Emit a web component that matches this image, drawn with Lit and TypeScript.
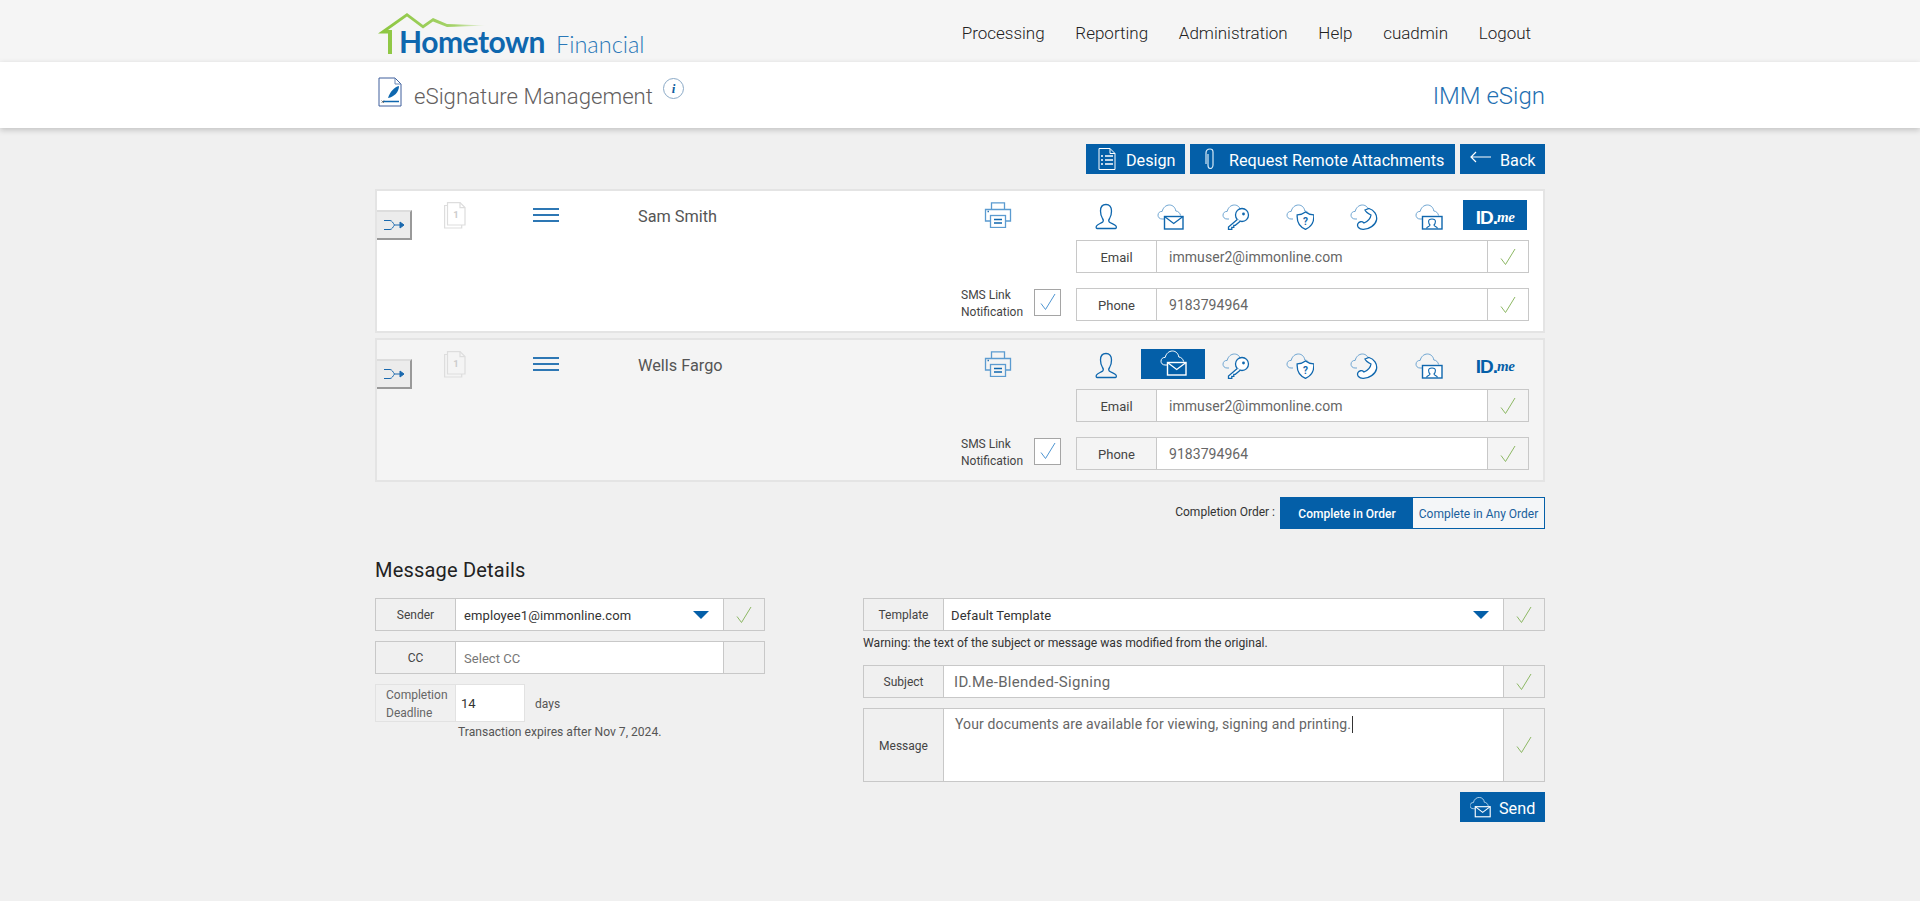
import { LitElement, html, css, svg } from "lit";
import { customElement } from "lit/decorators.js";

const cloud = (c: string) => svg`<path d="M9 19H7C4.5 19 3 17.2 3 15.2C3 12.8 5 11.2 7.2 11.4C8 7.6 11 5 14.4 5C18 5 20.4 7.8 20.8 11C23 11 25 13 25.6 15.5" fill="none" stroke="${c}" stroke-width="1"/>`;

const icons: Record<string, (d: string, l: string) => unknown> = {
  user: (d) => svg`<path d="M6 28.5H24.5C25.5 28.5 25.5 27 25 26C24 24 20 23.5 18.3 22C17.4 21 17.6 19.8 18.6 18.5C20 16.5 20.5 14 20.5 11C20.5 7 18.5 4.5 15 4.5C11.5 4.5 9.5 7 9.5 11C9.5 14 10.2 16.5 11.5 18.5C12.5 19.8 12.6 21 11.7 22C10 23.5 6.5 24 5.5 26C5 27 5 28.5 6 28.5Z" fill="none" stroke="${d}" stroke-width="1.3"/>`,
  mail: (d, l) => svg`${cloud(l)}<rect x="9.5" y="16.5" width="18.5" height="12.5" fill="none" stroke="${d}" stroke-width="1.4"/><path d="M9.5 16.5L18.7 23.5L28 16.5" fill="none" stroke="${d}" stroke-width="1.3"/>`,
  key: (d, l) => svg`${cloud(l)}<circle cx="22" cy="15" r="6.5" fill="#fff" stroke="${d}" stroke-width="1.3"/><circle cx="23.5" cy="14" r="1.4" fill="${d}"/><path d="M17.3 19.5L8.5 27V29.3H11.8V27.3H13.8V25.3H15.3L20.5 21" fill="#fff" stroke="${d}" stroke-width="1.3"/>`,
  shield: (d, l) => svg`${cloud(l)}<path d="M21.5 12C24 14 26.500 14.800 29.800 14.800C30.300 21.500 27.500 26.800 21.500 29.300C15.500 26.800 12.700 21.500 13.200 14.800C16.500 14.800 19 14 21.500 12Z" fill="#fff" stroke="${d}" stroke-width="1.3"/><text x="21.500" y="24.500" text-anchor="middle" font-family="Roboto" font-weight="700" font-size="10" fill="${d}">?</text>`,
  phone: (d, l) => svg`${cloud(l)}<path d="M17 10L21 8.5C26 10 29.5 15 28.5 20C27.5 25 21 29.5 15 29.3C11 29.3 8.5 26.5 10 23.5C11 21.5 14 21 16 23C19.5 21.5 22.5 18.5 23 15C21 14 18 12.5 17 10Z" fill="#fff" stroke="${d}" stroke-width="1.3"/>`,
  video: (d, l) => svg`${cloud(l)}<rect x="9.5" y="16.5" width="19.5" height="12.5" fill="#fff" stroke="${d}" stroke-width="1.4"/><path d="M13.5 28.5C14 26.5 17 26.5 17 25C16 24 15.6 22.8 15.6 21.5C15.6 19.8 16.8 19 19 19C21.2 19 22.4 19.8 22.4 21.5C22.4 22.8 22 24 21 25C21 26.5 24 26.5 24.5 28.5" fill="none" stroke="${d}" stroke-width="1.1"/>`,
};

const check = (c = "#8db864") => html`<svg width="16" height="18" viewBox="0 0 16 18"><path d="M1 10.5L5.5 16.5L15 1" fill="none" stroke="${c}" stroke-width="1"/></svg>`;

const pageIcon = html`<svg width="24" height="28" viewBox="0 0 24 28" fill="none" stroke="#ddd" stroke-width="1.2"><path d="M3.5 3.5H.6V26H17.7V23"/><path d="M3.5 .6H16L21 5.6V23H3.5Z"/><path d="M16 .6V5.6H21" /><text x="12" y="15.5" text-anchor="middle" font-family="Roboto" font-weight="700" font-size="9.5" stroke="none" fill="#ccc">1</text></svg>`;

const printer = html`<svg width="28" height="26" viewBox="0 0 28 26" fill="none" stroke="#5b9bd0" stroke-width="1.3"><path d="M7.5 7V.8H20.5V7"/><path d="M6.5 19H1.5V7.5H26.5V19H21.5"/><rect x="6.5" y="13.5" width="15" height="12"/><path d="M10 17.5H18M10 21H18" stroke="#0f67ae"/><path d="M3.5 9.5H5" stroke="#2d77b4"/></svg>`;

const merge = html`<svg width="22" height="12" viewBox="0 0 22 12" fill="none" stroke="#1a69ae" stroke-width="1"><path d="M1 1.5H7C9 1.5 10 4 11.5 6C10 8 9 10.5 7 10.5H1"/><path d="M11.5 6H18"/><path d="M17 3L21 6L17 9Z" fill="#1a69ae"/></svg>`;

const caret = html`<svg class="caret" width="16" height="9" viewBox="0 0 16 9"><path d="M0 0H16L8 8Z" fill="#045fa8"/></svg>`;

@customElement("app-root")
export class AppRoot extends LitElement {
  static styles = css`
    :host { display: block; min-height: 901px; background: #f0f0f0; font-family: Roboto, sans-serif; color: #555; }
    .wrap { width: 1170px; margin: 0 auto; }
    .top { background: #f5f5f5; height: 62px; }
    .top .wrap { display: flex; justify-content: space-between; height: 62px; }
    .logo { position: relative; width: 280px; height: 62px; }
    .logo svg { position: absolute; left: 0; top: 0; }
    .hometown { position: absolute; left: 24px; top: 21px; font: 700 30px/40px Lato, sans-serif; color: #0f67ae; letter-spacing: -.5px; }
    .financial { position: absolute; left: 181px; top: 29px; font: 300 23.5px/30px Lato, sans-serif; color: #2a78b8; }
    nav { display: flex; gap: 30.7px; padding: 24px 14px 0 0; font-size: 17px; line-height: 19px; font-weight: 300; color: #222; }
    .band { background: #fff; height: 66px; box-shadow: 0 2px 6px rgba(0,0,0,.2); }
    .band .wrap { display: flex; align-items: flex-start; }
    .band .doc { margin: 15px 12px 0 3px; }
    .title { font-size: 22.2px; line-height: 26px; font-weight: 300; color: #645f5f; margin-top: 21px; }
    .info { margin: 16px 0 0 10px; }
    .prod { margin-left: auto; margin-top: 20px; font-size: 24px; line-height: 28px; font-weight: 300; color: #1f70b2; }
    .actions { display: flex; justify-content: flex-end; gap: 5px; padding-top: 16px; }
    .btn { height: 30px; background: #045fa8; color: #fff; display: flex; align-items: center; font-size: 16.2px; box-sizing: border-box; }
    .btn svg { flex: none; }
    .btn span { margin-top: 3px; }
    .design { width: 99px; padding-left: 12px; gap: 10px; }
    .req { width: 265px; padding-left: 14px; gap: 14px; }
    .back { width: 85px; padding-left: 10px; gap: 9px; }
    .back svg { margin-top: -4px; }
    .card { margin-top: 5px; height: 144px; box-sizing: border-box; border: 2px solid #e4e4e4; background: #fff; display: grid; grid-template-columns: 584px 115px 453px; grid-template-rows: 30px 33px 33px; row-gap: 10px; padding-top: 9px; }
    .card.first { margin-top: 15px; }
    .card.alt { background: #f4f4f4; }
    .left { grid-row: 1 / 4; display: flex; align-items: flex-start; }
    .merge { flex: none; margin-top: 10px; width: 35px; height: 30px; box-sizing: border-box; background: #ececec; border-right: 2px solid #999; border-bottom: 2px solid #999; border-top: 2px solid #ddd; display: flex; align-items: center; justify-content: center; }
    .pg { margin: 2px 0 0 32px; width: 24px; }
    .lines { margin: 8px 0 0 65px; width: 26px; height: 14px; border-top: 2px solid #2d77b4; }
    .lines i { display: block; height: 2px; background: #2d77b4; margin-top: 4px; }
    .name { margin: 7px 0 0 79px; font-size: 16.3px; line-height: 20px; color: #555; }
    .prn { grid-column: 2; grid-row: 1; padding: 2px 0 0 23px; }
    .sms { grid-column: 2; grid-row: 3; margin-top: 5px; display: flex; align-items: center; font-size: 12px; line-height: 17px; color: #444; }
    .sms span { width: 70px; margin-top: 3px; }
    .cb { width: 27px; height: 27px; box-sizing: border-box; border: 1px solid #a5a5a5; background: #fff; margin-left: 3px; display: flex; align-items: center; justify-content: center; }
    .methods { grid-column: 3; grid-row: 1; display: grid; grid-template-columns: repeat(7, 64.4px); width: 451px; margin-left: .6px; }
    .m { height: 30px; display: flex; align-items: center; justify-content: center; padding-right: 6px; box-sizing: border-box; }
    .m.sel { background: #045fa8; padding-right: 0; }
    .m.sel svg { margin-top: -6px; }
    .idme { padding: 5px 0 0; font: 700 19px/25px "Liberation Sans", sans-serif; color: #045fa8; letter-spacing: -1px; }
    .idme em { font: italic 700 15px "Liberation Serif", serif; letter-spacing: -.5px; }
    .idme.sel { color: #fff; padding-right: 0; }
    .field { display: flex; height: 33px; box-sizing: border-box; border: 1px solid #c8c8c8; }
    .f-1 { grid-column: 3; grid-row: 2; }
    .f-2 { grid-column: 3; grid-row: 3; margin-top: 5px; }
    .lab { flex: none; width: 80px; box-sizing: border-box; padding-top: 1px; border-right: 1px solid #c8c8c8; display: flex; align-items: center; justify-content: center; font-size: 13px; color: #444; text-align: center; }
    .val { flex: 1; display: flex; align-items: center; padding: 1px 0 0 12px; background: #fff; font-size: 14px; letter-spacing: .05px; color: #666; min-width: 0; }
    .chk { flex: none; width: 41px; box-sizing: border-box; border-left: 1px solid #c8c8c8; display: flex; align-items: center; justify-content: center; }
    .order { display: flex; justify-content: flex-end; align-items: center; margin-top: 15px; font-size: 12px; color: #333; }
    .order .t { margin-right: 5px; margin-top: -2px; }
    .seg { display: flex; height: 32px; width: 265px; box-sizing: border-box; border: 1px solid #045fa8; background: #f4f6f8; }
    .seg b { width: 132px; background: #045fa8; color: #fff; font-weight: 500; display: flex; align-items: center; justify-content: center; padding-top: 1px; box-sizing: border-box; }
    .seg span { flex: 1; color: #1a5f9c; display: flex; align-items: center; justify-content: center; padding-top: 1px; }
    h2 { margin: 29px 0 0; font-size: 20px; line-height: 24px; letter-spacing: .2px; font-weight: 400; color: #222; }
    .cols { display: grid; grid-template-columns: 390px 682px; justify-content: space-between; margin-top: 16px; align-items: start; }
    .stack { display: flex; flex-direction: column; }
    .stack .lab { font-size: 12px; }
    .grow { flex: 1; }
    .caret { margin-right: 14px; }
    .sel-text { color: #333; font-size: 13px; letter-spacing: .1px; }
    .ph { color: #777; font-size: 13px; }
    .lcol .val { padding-left: 8px; }
    .gap { margin-top: 10px; }
    .deadline { display: flex; margin-top: 10px; height: 38px; font-size: 12px; }
    .dl { width: 81px; box-sizing: border-box; border: 1px solid #e2e2e2; line-height: 18px; color: #666; padding: 1px 0 0 10px; }
    .dv { width: 69px; box-sizing: border-box; background: #fff; border: 1px solid #e2e2e2; border-left: 0; padding: 1px 0 0 5px; display: flex; align-items: center; color: #333; font-size: 13px; }
    .dy { margin: 1px 0 0 10px; display: flex; align-items: center; color: #555; }
    .exp { margin: 2px 0 0 83px; font-size: 12.1px; line-height: 16px; color: #555; }
    .warn { font-size: 12.15px; line-height: 16px; color: #333; margin: 4px 0 14px; }
    .msg { margin-top: 10px; height: 74px; }
    .msg .val { align-items: flex-start; padding-top: 7px; letter-spacing: .13px; }
    .msg .val i { display: inline-block; width: 1px; height: 17px; background: #333; margin-left: 1px; }
    .rcol .val { padding-left: 7px; }
    .rcol .subj { padding-left: 10px; }
    .rcol .msg .val { padding-left: 11px; }
    .subj { font-size: 15px; letter-spacing: .3px; }
    .sendrow { display: flex; justify-content: flex-end; margin-top: 10px; }
    .send { width: 85px; padding-left: 10px; gap: 8px; }
  `;

  method(kind: string, sel: boolean) {
    const d = sel ? "#fff" : "#0f67ae";
    const l = sel ? "#fff" : "#6ea5d2";
    return html`<div class="m ${sel ? "sel" : ""}"><svg width="30" height="30" viewBox="0 0 30 30">${icons[kind](d, l)}</svg></div>`;
  }

  card(name: string, email: string, sel: string, cls: string) {
    const kinds = ["user", "mail", "key", "shield", "phone", "video"];
    return html`<div class="card ${cls}">
      <div class="left">
        <div class="merge">${merge}</div>
        <div class="pg">${pageIcon}</div>
        <div class="lines"><i></i><i></i></div>
        <div class="name">${name}</div>
      </div>
      <div class="prn">${printer}</div>
      <div class="sms"><span>SMS Link Notification</span><div class="cb">${check("#4f96d2")}</div></div>
      <div class="methods">
        ${kinds.map((k) => this.method(k, sel === k))}
        <div class="m idme ${sel === "idme" ? "sel" : ""}">ID.<em>me</em></div>
      </div>
      <div class="field f-1"><div class="lab">Email</div><div class="val">${email}</div><div class="chk">${check()}</div></div>
      <div class="field f-2"><div class="lab">Phone</div><div class="val">9183794964</div><div class="chk">${check()}</div></div>
    </div>`;
  }

  render() {
    return html`
      <div class="top"><div class="wrap">
        <div class="logo">
          <svg width="120" height="56" viewBox="0 0 120 56">
            <defs><linearGradient id="g" x1="0" x2="1"><stop offset="0" stop-color="#8cc63f"/><stop offset=".7" stop-color="#a5d36a"/><stop offset="1" stop-color="#f5f5f5"/></linearGradient></defs>
            <path d="M3 33.5L32 13L48 25L58 18L72 24L112 25.5L72 27L58 21.5L48 28.5L32 16.5L13 30H17V54H13V33.5Z" fill="url(#g)"/>
          </svg>
          <div class="hometown">Hometown</div>
          <div class="financial">Financial</div>
        </div>
        <nav><span>Processing</span><span>Reporting</span><span>Administration</span><span>Help</span><span>cuadmin</span><span>Logout</span></nav>
      </div></div>
      <div class="band"><div class="wrap">
        <svg class="doc" width="24" height="30" viewBox="0 0 24 30" fill="none"><path d="M1 1H17L23 7V29H1Z" stroke="#3e5f9c"/><path d="M17 1V7H23" stroke="#6b87b5"/><path d="M10 21C12 15 16 10 21 9C21 15 16 20 10 21Z" fill="#0f67ae"/><path d="M5 24.5H21" stroke="#0f67ae" stroke-width="1.5"/><path d="M3.5 23.5L6 26M6 23.5L3.5 26" stroke="#555" stroke-width=".7"/></svg>
        <div class="title">eSignature Management</div>
        <svg class="info" width="21" height="21" viewBox="0 0 21 21"><circle cx="10.5" cy="10.5" r="10" fill="#fff" stroke="#8aa9c6"/><text x="10.5" y="15" text-anchor="middle" font-family="Liberation Serif" font-style="italic" font-weight="700" font-size="13" fill="#0f5e9e">i</text></svg>
        <div class="prod">IMM eSign</div>
      </div></div>
      <div class="wrap">
        <div class="actions">
          <div class="btn design"><svg width="18" height="22" viewBox="0 0 18 22" fill="none" stroke="#fff"><path d="M1 .5H12L17 5.5V21.5H1Z"/><path d="M12 .5V5.5H17"/><path d="M3 8H5M7 8H15M3 12H5M7 12H15M3 16H5M7 16H15" stroke-width="1.3"/></svg><span>Design</span></div>
          <div class="btn req"><svg width="11" height="22" viewBox="0 0 11 22" fill="none" stroke="#d7e9f7" stroke-width="1.2"><path d="M4 6V17C4 19 4.5 20.5 6 20.5C7.5 20.5 9 19 9 17V4C9 2 8 1 6 1C4 1 2 2 2 5V16"/></svg><span>Request Remote Attachments</span></div>
          <div class="btn back"><svg width="21" height="12" viewBox="0 0 21 12" fill="none" stroke="#fff" stroke-width="1.2"><path d="M21 6H1M6 1L1 6L6 11"/></svg><span>Back</span></div>
        </div>
        ${this.card("Sam Smith", "immuser2@immonline.com", "idme", "first")}
        ${this.card("Wells Fargo", "immuser2@immonline.com", "mail", "alt")}
        <div class="order"><span class="t">Completion Order :</span><div class="seg"><b>Complete in Order</b><span>Complete in Any Order</span></div></div>
        <h2>Message Details</h2>
        <div class="cols">
          <div class="stack lcol">
            <div class="field"><div class="lab">Sender</div><div class="val"><span class="sel-text grow">employee1@immonline.com</span>${caret}</div><div class="chk">${check()}</div></div>
            <div class="field gap"><div class="lab">CC</div><div class="val"><span class="ph">Select CC</span></div><div class="chk"></div></div>
            <div class="deadline"><div class="dl">Completion Deadline</div><div class="dv">14</div><div class="dy">days</div></div>
            <div class="exp">Transaction expires after Nov 7, 2024.</div>
          </div>
          <div class="stack rcol">
            <div class="field"><div class="lab">Template</div><div class="val"><span class="sel-text grow">Default Template</span>${caret}</div><div class="chk">${check()}</div></div>
            <div class="warn">Warning: the text of the subject or message was modified from the original.</div>
            <div class="field"><div class="lab">Subject</div><div class="val subj">ID.Me-Blended-Signing</div><div class="chk">${check()}</div></div>
            <div class="field msg"><div class="lab">Message</div><div class="val"><span>Your documents are available for viewing, signing and printing.</span><i></i></div><div class="chk">${check()}</div></div>
            <div class="sendrow"><div class="btn send"><svg width="21" height="21" viewBox="3 5 26 25" fill="none"><path d="M9 19H7C4.5 19 3 17.2 3 15.2C3 12.8 5 11.2 7.2 11.4C8 7.6 11 5 14.4 5C18 5 20.4 7.8 20.8 11C23 11 25 13 25.6 15.5" stroke="#cfe6f6"/><rect x="9.5" y="16.5" width="18.5" height="12.5" fill="#045fa8" stroke="#fff" stroke-width="1.4"/><path d="M9.5 16.5L18.7 23.5L28 16.5" stroke="#fff" stroke-width="1.3"/></svg><span>Send</span></div></div>
          </div>
        </div>
      </div>
    `;
  }
}
